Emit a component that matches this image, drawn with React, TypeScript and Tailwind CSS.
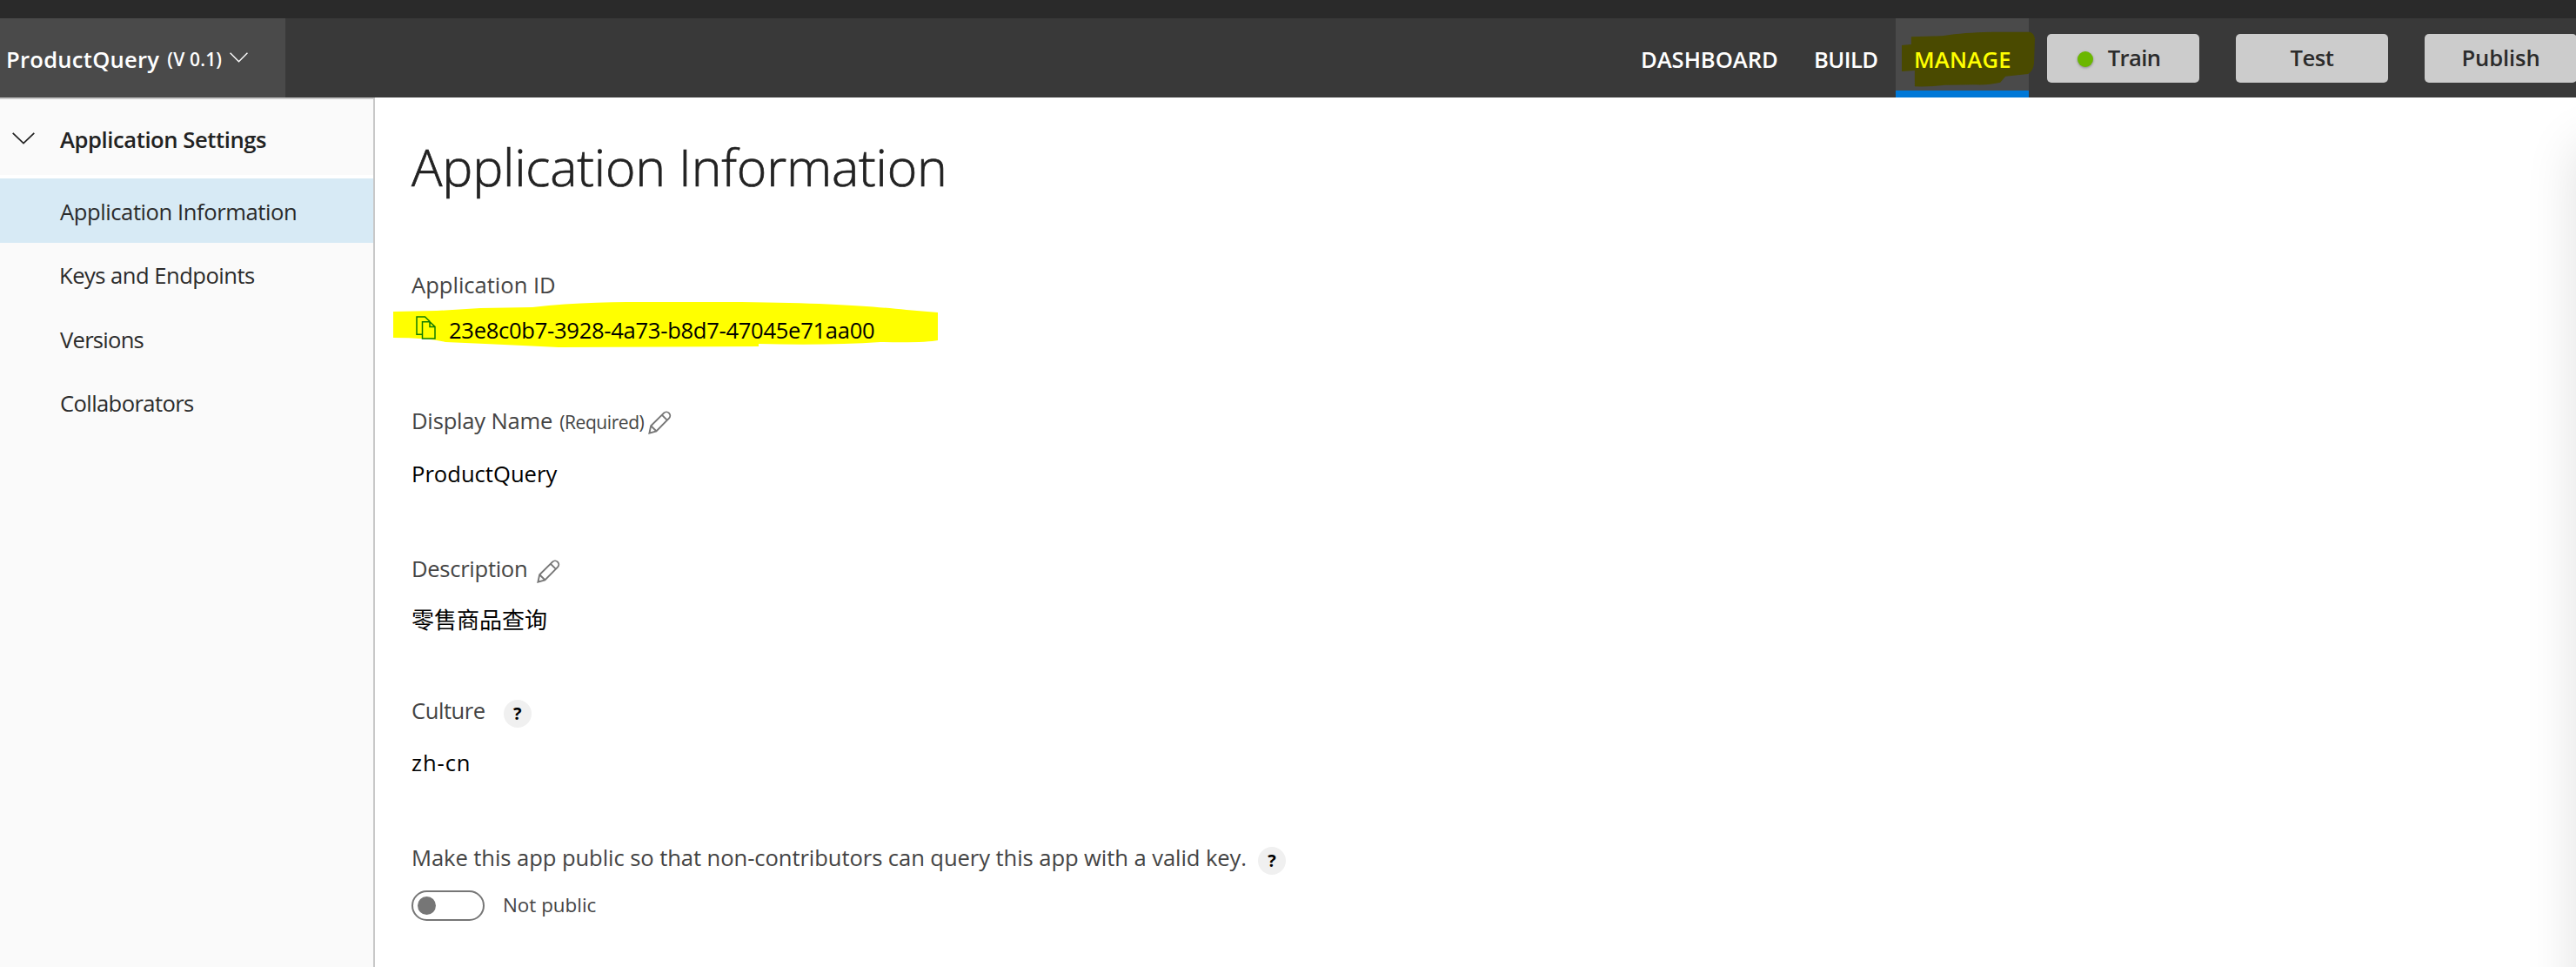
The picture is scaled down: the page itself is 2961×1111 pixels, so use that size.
import type { ReactNode } from 'react';

function Chevron({ className }: { className: string }) {
  return (
    <svg viewBox="0 0 26 14" className={className} fill="none" stroke="currentColor" strokeWidth="1.7" preserveAspectRatio="none">
      <path d="M0.7 0.8 L13 12.6 L25.3 0.8" />
    </svg>
  );
}

function Pencil({ className }: { className: string }) {
  return (
    <svg viewBox="0 0 27 27" className={className} fill="none" stroke="#767676" strokeWidth="1.9">
      <path d="M1.4 25.6 L3.2 17.3 L18 2.6 a4.2 4.2 0 0 1 6 6 L9.4 23.3 Z M3.2 17.3 L9.4 23.3 M16 4.8 L22 10.8" />
    </svg>
  );
}

function CopyIcon() {
  return (
    <svg viewBox="0 0 23 27" className="h-[27px] w-[23px]" fill="none" stroke="#107c00" strokeWidth="1.5">
      <path d="M7.5 21.2 H1 V1 H10.5 L16 6.2" />
      <path d="M7.5 6.7 H16 L22 12.4 V26 H7.5 Z M16 6.7 V12.4 H22" />
    </svg>
  );
}

function Help({ className }: { className: string }) {
  return (
    <span className={`flex h-8 w-8 items-center justify-center rounded-full bg-[#f0f0f0] text-[20px] leading-8 font-bold text-black ${className}`}>
      ?
    </span>
  );
}

function HeaderButton({ children }: { children: ReactNode }) {
  return (
    <button className="flex h-14 w-[175px] items-center justify-center rounded-[5px] bg-[#ccc] text-[25.6px] font-semibold text-[#2b2b2b]">
      {children}
    </button>
  );
}

function Header() {
  return (
    <header className="flex h-[91px] justify-between bg-[#393939] text-[25.6px] font-semibold text-white">
      <div className="flex w-[328px] items-center bg-[#4a4a4a] pt-[5px] pl-[7px]">
        <span className="tracking-[0.25px]">ProductQuery</span>
        <span className="ml-[9px] text-[21px] tracking-[0.17px]">(V 0.1)</span>
        <Chevron className="mb-[7px] ml-[9px] h-[12px] w-[21px]" />
      </div>
      <div className="-mr-px flex">
        <nav className="flex">
          <a className="flex w-[199px] items-center pt-[5px] pl-[21px] tracking-[-0.03px]">DASHBOARD</a>
          <a className="flex w-[115px] items-center pt-[5px] pl-[21px] tracking-[-0.6px]">BUILD</a>
          <a className="relative flex w-[153px] items-center border-b-8 border-[#0078d7] bg-[#4a4a4a] pt-[13px] pl-[21px] tracking-[0.25px] text-[#ff0]">
            <svg viewBox="0 0 154 64" className="absolute top-[15px] left-[7px] h-[64px] w-[153px]" fill="#4a4a00">
              <path d="M11 6 L47 5 C68 2 84 1 108 0.5 L148 0.5 Q153 2 154 8 L153 37 Q152 46 146 49 L120 52 L114 59 Q100 62 86 61.5 L50 62 Q34 64 15 63.5 L15 45 L0 46 L0 16 L11 15 Z" />
            </svg>
            <span className="relative">MANAGE</span>
          </a>
        </nav>
        <div className="ml-[21px] flex gap-[42px] pt-[18px]">
          <HeaderButton>
            <span className="mt-px mr-[17px] h-[18px] w-[18px] rounded-full bg-[#6bb700] shadow-[0_1px_3px_rgba(0,0,0,0.35)]" />
            <span className="mr-2.5 tracking-[-0.62px]">Train</span>
          </HeaderButton>
          <HeaderButton>
            <span className="tracking-[-0.5px]">Test</span>
          </HeaderButton>
          <HeaderButton>
            <span className="tracking-[-0.11px]">Publish</span>
          </HeaderButton>
        </div>
      </div>
    </header>
  );
}

function Sidebar() {
  return (
    <aside className="w-[431px] border-t-2 border-r-2 border-[#c8c8c8] bg-[#fafafa] text-[25.6px] text-[#2b2b2b]">
      <div className="flex h-[91px] items-center border-b-4 border-white pt-[7px] pl-3.5 text-[#222]">
        <Chevron className="mb-[5px] h-[14px] w-[26px]" />
        <span className="ml-[29px] font-semibold tracking-[-0.42px]">Application Settings</span>
      </div>
      <a className="flex h-[74px] items-center bg-[#d7eaf5] pt-1 pl-[69px] tracking-[-0.43px]">Application Information</a>
      <a className="flex h-[73px] items-center pt-1 pl-[68px] tracking-[-0.52px]">Keys and Endpoints</a>
      <a className="flex h-[74px] items-center pt-1 pl-[69px] tracking-[-0.75px]">Versions</a>
      <a className="flex h-[73px] items-center pt-1 pl-[69px] tracking-[-0.61px]">Collaborators</a>
    </aside>
  );
}

export default function App() {
  return (
    <div className="flex h-[1111px] w-[2961px] flex-col overflow-hidden bg-white font-['Open_Sans','Noto_Sans_CJK_SC',sans-serif] whitespace-nowrap">
      <div className="h-[21px] bg-[#2a2a2a]" />
      <Header />
      <div className="relative flex flex-1 overflow-hidden">
        <Sidebar />
        <main className="flex flex-1 flex-col items-start pt-[39px] pl-[42px] text-[25.6px] leading-9 text-[#444]">
          <h1 className="text-[59px] leading-[80px] font-light tracking-[-0.2px] text-[#222] [-webkit-text-stroke:0.7px_#222]">Application Information</h1>

          <div className="mt-[79px] tracking-[-0.02px]">Application ID</div>
          <div className="relative mt-4 flex text-black">
            <svg viewBox="0 0 626 52" className="absolute -top-[15px] -left-[21px] h-[52px] w-[626px]" fill="#ff0">
              <path d="M0 11 L50 10 L100 7 L160 6 C210 0 260 0 300 0 L400 0 C500 1 550 5 590 9 L626 12 L626 44 Q612 47 560 46 Q500 50 420 48 L420 51 L190 52 Q130 49 60 46 Q40 41 0 41 Z" />
            </svg>
            <span className="relative ml-[5px] pt-px"><CopyIcon /></span>
            <span className="relative ml-[15px] tracking-[-0.3px]">23e8c0b7-3928-4a73-b8d7-47045e71aa00</span>
          </div>

          <div className="mt-[68px] flex h-9 items-center">
            <span className="tracking-[-0.2px]">Display Name</span>
            <span className="ml-2 pt-0.5 text-[21px] tracking-[-0.42px]">(Required)</span>
            <Pencil className="mt-0.5 ml-[5px] h-[27px] w-[27px]" />
          </div>
          <div className="mt-[25px] text-black">ProductQuery</div>

          <div className="mt-[73px] flex h-9 items-center">
            <span className="tracking-[-0.3px]">Description</span>
            <Pencil className="mt-1 ml-[11px] h-[27px] w-[27px]" />
          </div>
          <div className="mt-[22px] text-[26px] text-black">零售商品查询</div>

          <div className="mt-[69px] flex h-9 items-center">
            <span className="tracking-[-0.45px]">Culture</span>
            <Help className="mt-1.5 ml-[21px]" />
          </div>
          <div className="mt-6 tracking-[0.9px] text-black">zh-cn</div>

          <div className="mt-[73px] flex h-9 items-center">
            <span className="tracking-[-0.08px]">
              Make this app public so that non-contributors can query this app with a valid key.
            </span>
            <Help className="mt-1.5 ml-[13px]" />
          </div>
          <div className="mt-[19px] flex h-[35px] items-center">
            <span className="flex h-[35px] w-[84px] items-center rounded-full border-2 border-[#767676] pl-[5px]">
              <span className="h-[21px] w-[21px] rounded-full bg-[#767676]" />
            </span>
            <span className="-mt-0.5 ml-[21px] text-[22.4px]">Not public</span>
          </div>
        </main>
        {/* Shadow cast by the panel docked past the right edge */}
        <div className="absolute top-[55px] -bottom-24 left-full w-40 shadow-[0_0_60px_rgba(0,0,0,0.12)]" />
      </div>
    </div>
  );
}
